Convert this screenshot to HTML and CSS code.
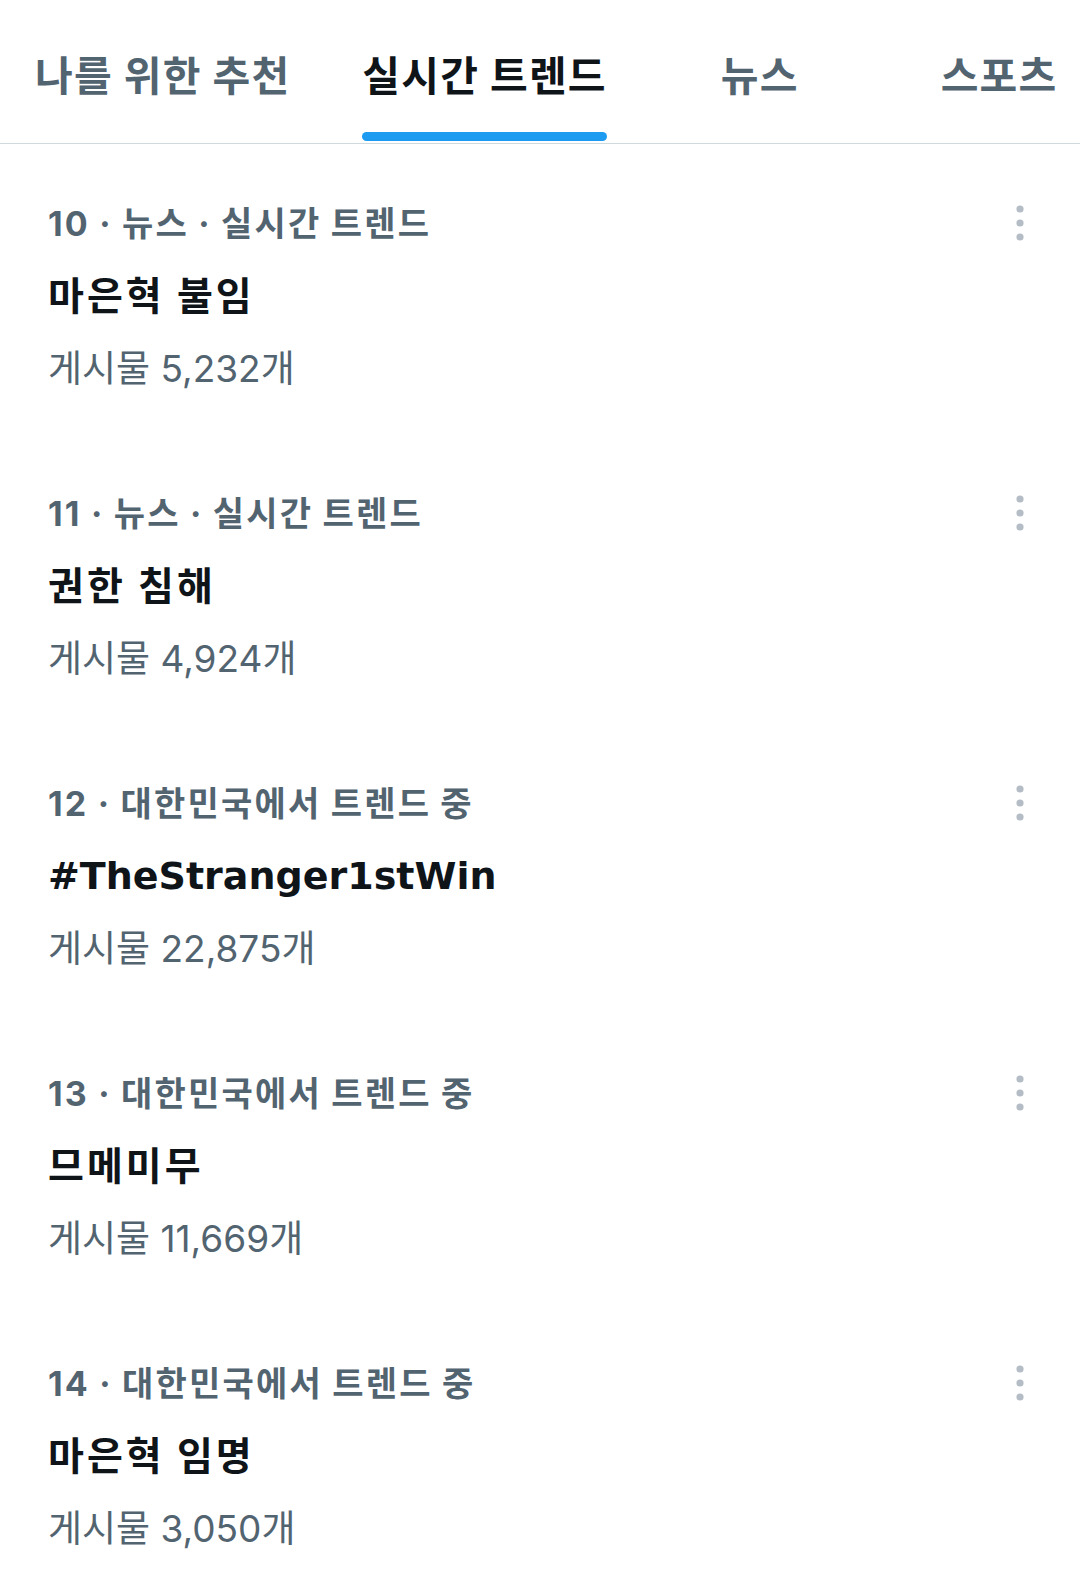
FILE: index.html
```html
<!DOCTYPE html>
<html lang="ko">
<head>
<meta charset="utf-8">
<title>실시간 트렌드</title>
<link rel="stylesheet" href="styles.css">
</head>
<body>
<nav class="tabs">
  <div class="tab tab-1"><span class="tab-label">나를 위한 추천</span></div>
  <div class="tab tab-2 active"><span class="tab-label">실시간 트렌드</span><span class="indicator"></span></div>
  <div class="tab tab-3"><span class="tab-label">뉴스</span></div>
  <div class="tab tab-4"><span class="tab-label">스포츠</span></div>
</nav>
<main class="list">
  <section class="trend">
    <div class="trend-body">
      <div class="meta">10 · 뉴스 · 실시간 트렌드</div>
      <div class="title">마은혁 불임</div>
      <div class="count">게시물 5,232개</div>
    </div>
    <svg class="more" viewBox="0 0 8 36" width="8" height="36"><circle cx="4" cy="4" r="3.6"/><circle cx="4" cy="18" r="3.6"/><circle cx="4" cy="32" r="3.6"/></svg>
  </section>
  <section class="trend">
    <div class="trend-body">
      <div class="meta">11 · 뉴스 · 실시간 트렌드</div>
      <div class="title">권한 침해</div>
      <div class="count">게시물 4,924개</div>
    </div>
    <svg class="more" viewBox="0 0 8 36" width="8" height="36"><circle cx="4" cy="4" r="3.6"/><circle cx="4" cy="18" r="3.6"/><circle cx="4" cy="32" r="3.6"/></svg>
  </section>
  <section class="trend">
    <div class="trend-body">
      <div class="meta">12 · 대한민국에서 트렌드 중</div>
      <div class="title hashtag">#TheStranger1stWin</div>
      <div class="count">게시물 22,875개</div>
    </div>
    <svg class="more" viewBox="0 0 8 36" width="8" height="36"><circle cx="4" cy="4" r="3.6"/><circle cx="4" cy="18" r="3.6"/><circle cx="4" cy="32" r="3.6"/></svg>
  </section>
  <section class="trend">
    <div class="trend-body">
      <div class="meta">13 · 대한민국에서 트렌드 중</div>
      <div class="title">므메미무</div>
      <div class="count">게시물 11,669개</div>
    </div>
    <svg class="more" viewBox="0 0 8 36" width="8" height="36"><circle cx="4" cy="4" r="3.6"/><circle cx="4" cy="18" r="3.6"/><circle cx="4" cy="32" r="3.6"/></svg>
  </section>
  <section class="trend">
    <div class="trend-body">
      <div class="meta">14 · 대한민국에서 트렌드 중</div>
      <div class="title">마은혁 임명</div>
      <div class="count">게시물 3,050개</div>
    </div>
    <svg class="more" viewBox="0 0 8 36" width="8" height="36"><circle cx="4" cy="4" r="3.6"/><circle cx="4" cy="18" r="3.6"/><circle cx="4" cy="32" r="3.6"/></svg>
  </section>
</main>
</body>
</html>
```
FILE: styles.css
```css
* { box-sizing: border-box; }
html, body { margin: 0; padding: 0; background: #ffffff; }
body {
  width: 1080px;
  font-family: Inter, "Noto Sans CJK KR", sans-serif;
  color: #0f1419;
  overflow: hidden;
}
.tabs {
  display: flex;
  align-items: flex-start;
  height: 144px;
  padding-left: 35px;
  border-bottom: 1px solid #cfd9de;
}
.tab {
  display: flex;
  flex-direction: column;
  height: 143px;
  padding-top: 45px;
}
.tab-label {
  font-size: 41px;
  line-height: 62px;
  letter-spacing: 1.2px;
  font-weight: 700;
  color: #536471;
  white-space: nowrap;
}
.tab.active .tab-label { color: #0f1419; }
.tab-2 { margin-left: 72px; }
.tab-3 { margin-left: 114px; }
.tab-4 { margin-left: 142px; }
.indicator {
  display: block;
  margin-top: 25px;
  height: 9px;
  border-radius: 5px;
  background: #1d9bf0;
}
.trend {
  display: flex;
  justify-content: space-between;
  align-items: flex-start;
  padding: 44px 56px 30px 48px;
}
.meta {
  font-size: 34px;
  line-height: 71px;
  letter-spacing: 2.2px;
  word-spacing: -1px;
  font-weight: 700;
  color: #536471;
  white-space: nowrap;
}
.title {
  font-size: 39px;
  line-height: 74px;
  letter-spacing: 3px;
  font-weight: 700;
  color: #0f1419;
  white-space: nowrap;
}
.title.hashtag {
  font-family: "DejaVu Sans", "Noto Sans CJK KR", sans-serif;
  font-size: 38px;
  letter-spacing: 0;
}
.count {
  font-size: 37px;
  line-height: 71px;
  font-weight: 400;
  color: #536471;
  white-space: nowrap;
}
.more {
  margin-top: 17px;
  fill: #b4bdc6;
  flex: none;
}
```
